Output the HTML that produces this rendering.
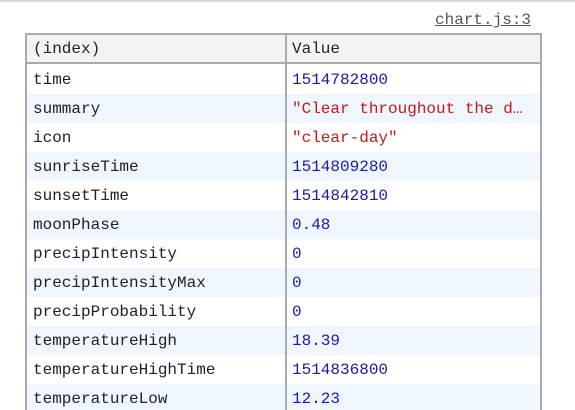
<!DOCTYPE html>
<html><head><style>
html,body{margin:0;padding:0;width:575px;height:410px;overflow:hidden;background:#fff;}
body{font-family:"Liberation Mono",monospace;font-size:16px;color:#222;position:relative;}
.topbar{position:absolute;left:0;top:0;width:575px;height:2px;background:#dadada;}
.link{position:absolute;right:44px;top:11px;color:#555;text-decoration:underline;text-decoration-color:#555;}
.tbl{position:absolute;left:25px;top:33px;width:513px;height:377px;border-left:2px solid #aaa;border-right:2px solid #aaa;border-top:2px solid #aaa;overflow:hidden;}
.hdr{position:absolute;left:0;top:0;width:513px;height:27px;background:#f3f3f3;border-bottom:2px solid #aaa;}
.div{position:absolute;left:258px;top:0;width:2px;height:400px;background:#aaa;}
.row{position:absolute;left:0;width:513px;height:29px;}
.alt{background:#f0f6fe;}
.c1,.c2{position:absolute;top:1px;line-height:29px;white-space:nowrap;}
.c1{left:6px;}
.c2{left:265px;}
.n{color:#1a1aa6;}
.s{color:#c41a16;}
</style></head><body>
<div class="topbar"></div>
<div class="link">chart.js:3</div>
<div class="tbl">
<div class="hdr"><div class="c1" style="line-height:27px">(index)</div><div class="c2" style="line-height:27px">Value</div></div>
<div class="row" style="top:30px"><div class="c1">time</div><div class="c2 n">1514782800</div></div>
<div class="row alt" style="top:59px"><div class="c1">summary</div><div class="c2 s">"Clear throughout the d…</div></div>
<div class="row" style="top:88px"><div class="c1">icon</div><div class="c2 s">"clear-day"</div></div>
<div class="row alt" style="top:117px"><div class="c1">sunriseTime</div><div class="c2 n">1514809280</div></div>
<div class="row" style="top:146px"><div class="c1">sunsetTime</div><div class="c2 n">1514842810</div></div>
<div class="row alt" style="top:175px"><div class="c1">moonPhase</div><div class="c2 n">0.48</div></div>
<div class="row" style="top:204px"><div class="c1">precipIntensity</div><div class="c2 n">0</div></div>
<div class="row alt" style="top:233px"><div class="c1">precipIntensityMax</div><div class="c2 n">0</div></div>
<div class="row" style="top:262px"><div class="c1">precipProbability</div><div class="c2 n">0</div></div>
<div class="row alt" style="top:291px"><div class="c1">temperatureHigh</div><div class="c2 n">18.39</div></div>
<div class="row" style="top:320px"><div class="c1">temperatureHighTime</div><div class="c2 n">1514836800</div></div>
<div class="row alt" style="top:349px"><div class="c1">temperatureLow</div><div class="c2 n">12.23</div></div>
<div class="div"></div>
</div>
</body></html>
